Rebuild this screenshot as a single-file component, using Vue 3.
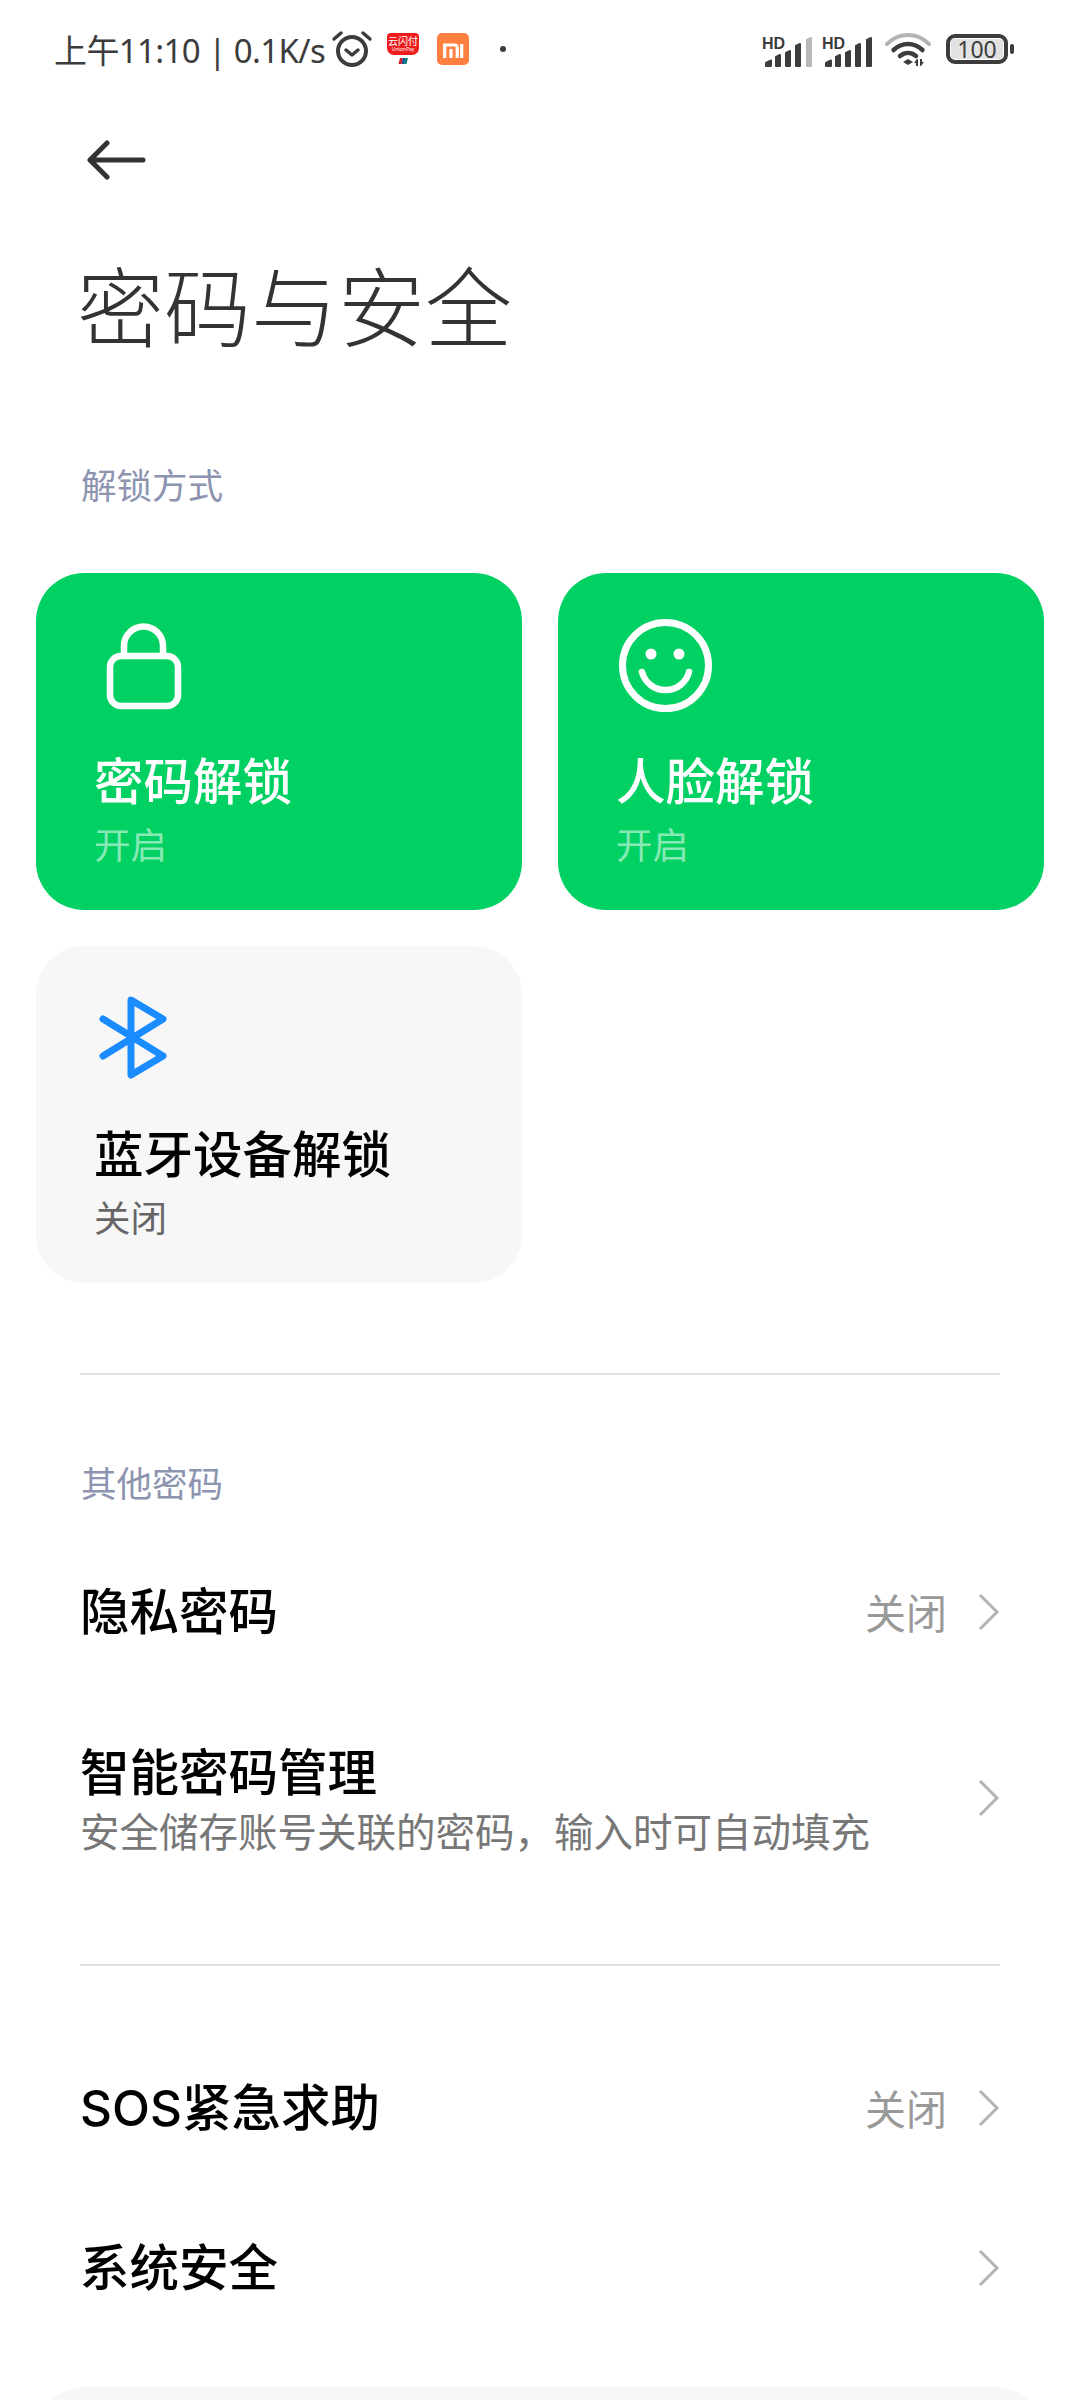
<template>
  <div class="page">
    <div class="status-bar">
      <div class="status-left">
        <span class="status-text">上午11:10 | 0.1K/s</span>
        <svg class="ic-alarm" width="42" height="38" viewBox="0 0 42 38">
          <circle cx="21" cy="21" r="14" fill="none" stroke="#3c3c3c" stroke-width="4" />
          <path d="M15 20l6 5 6-5" fill="none" stroke="#3c3c3c" stroke-width="3.5" stroke-linecap="round" stroke-linejoin="round" />
          <path d="M3 9l7-6M39 9l-7-6" fill="none" stroke="#3c3c3c" stroke-width="3.5" stroke-linecap="round" />
        </svg>
        <svg class="ic-union" width="32" height="32" viewBox="0 0 32 32">
          <path d="M4 0h24a4 4 0 0 1 4 4v11a7 7 0 0 1-7 7H7a7 7 0 0 1-7-7V4a4 4 0 0 1 4-4z" fill="#ee1c1c" />
          <text x="16" y="12" text-anchor="middle" class="union-cn">云闪付</text>
          <text x="16" y="18" text-anchor="middle" class="union-en">UnionPay</text>
          <path d="M13 25h3l-1.500 6h-3z" fill="#d81e2c" />
          <path d="M16 25h2.500l-1.500 6h-2.500z" fill="#0a4f8c" />
          <path d="M18.500 25h2.500l-1.500 6H17z" fill="#0a7a78" />
        </svg>
        <svg class="ic-mi" width="32" height="32" viewBox="0 0 32 32">
          <rect width="32" height="32" rx="5" fill="#ff7f41" />
          <path d="M7.700 25V12h10a2.500 2.500 0 0 1 2.500 2.500V25M14 16v9M24.700 11v14" fill="none" stroke="#fff" stroke-width="3.200" />
        </svg>
        <span class="status-dot"></span>
      </div>
      <div class="status-right">
        <svg class="ic-signal" width="50" height="36" viewBox="0 -3 50 36">
          <text x="0" y="12.500" class="hd">HD</text>
          <path d="M4 30V27L9 24.500V30ZM14 30V21L18 19V30ZM24 30V17L28 15V30ZM34 30V10L38 8V30Z" fill="#3c3c3c" stroke="#3c3c3c" stroke-width="2" stroke-linejoin="round" />
          <path d="M45 30V4L49 2V30Z" fill="#b8b8b8" stroke="#b8b8b8" stroke-width="2" stroke-linejoin="round" />
        </svg>
        <svg class="ic-signal" width="50" height="36" viewBox="0 -3 50 36">
          <text x="0" y="12.500" class="hd">HD</text>
          <path d="M4 30V27L9 24.500V30ZM14 30V21L18 19V30ZM24 30V17L28 15V30ZM34 30V10L38 8V30ZM45 30V4L49 2V30Z" fill="#3c3c3c" stroke="#3c3c3c" stroke-width="2" stroke-linejoin="round" />
        </svg>
        <svg class="ic-wifi" width="48" height="36" viewBox="0 0 48 36">
          <path d="M3 13C15 1 33 1 45 13" fill="none" stroke="#b4b4b4" stroke-width="4" stroke-linecap="round" />
          <path d="M9.500 19C18 11 30 11 38.500 19" fill="none" stroke="#3c3c3c" stroke-width="4.500" stroke-linecap="round" />
          <path d="M16 25c5-4 11-4 16 0" fill="none" stroke="#3c3c3c" stroke-width="4.500" stroke-linecap="round" />
          <path d="M19 31l5-3 5 3-5 3z" fill="#3c3c3c" />
          <path d="M33 28l-3 4h2v3h2v-7zM37 35l3-4h-2v-3h-2v7z" fill="#3c3c3c" />
        </svg>
        <div class="battery">
          <div class="battery-body"><span class="battery-fill">100</span></div>
          <span class="battery-nub"></span>
        </div>
      </div>
    </div>

    <div class="nav">
      <svg width="60" height="40" viewBox="0 0 60 40">
        <path d="M4 20h53M21 3L4 20l17 17" fill="none" stroke="#333" stroke-width="5" stroke-linecap="round" stroke-linejoin="round" />
      </svg>
    </div>

    <h1 class="title">密码与安全</h1>

    <div class="label first">解锁方式</div>

    <div class="cards">
      <div v-for="card in cards" :key="card.name" class="card" :class="{ on: card.on }">
        <svg class="card-icon" width="100" height="100" viewBox="0 0 100 100">
          <g v-if="card.icon === 'lock'" fill="none" stroke="#fff" stroke-width="6.500">
            <rect x="16" y="40" width="68" height="50" rx="11" />
            <path d="M30 40V30a19.500 19.500 0 0 1 39 0v10" />
          </g>
          <g v-else-if="card.icon === 'face'">
            <circle cx="49.500" cy="49.500" r="43" fill="none" stroke="#fff" stroke-width="7" />
            <circle cx="35" cy="38" r="5.500" fill="#fff" />
            <circle cx="63" cy="38" r="5.500" fill="#fff" />
            <path d="M26 56A24.300 24.300 0 0 0 73 56" fill="none" stroke="#fff" stroke-width="6.500" stroke-linecap="round" />
          </g>
          <path v-else d="M9 30L69 67L37 86V11L69 30L9 67" fill="none" stroke="#1a8cff" stroke-width="7" stroke-linecap="round" stroke-linejoin="round" />
        </svg>
        <div class="card-name">{{ card.name }}</div>
        <div class="card-state">{{ card.state }}</div>
      </div>
    </div>

    <div class="divider first-div"></div>

    <div class="label second">其他密码</div>

    <div class="row">
      <div class="row-name">隐私密码</div>
      <span class="row-value">关闭</span>
      <svg class="chev" width="22" height="38" viewBox="0 0 22 38"><path d="M2 2l17 17L2 36" fill="none" stroke="#b3b3b3" stroke-width="3" /></svg>
    </div>
    <div class="row tall">
      <div class="row-main">
        <div class="row-name">智能密码管理</div>
        <div class="row-sub">安全储存账号关联的密码，输入时可自动填充</div>
      </div>
      <svg class="chev" width="22" height="38" viewBox="0 0 22 38"><path d="M2 2l17 17L2 36" fill="none" stroke="#b3b3b3" stroke-width="3" /></svg>
    </div>

    <div class="divider second-div"></div>

    <div class="row">
      <div class="row-name">SOS紧急求助</div>
      <span class="row-value">关闭</span>
      <svg class="chev" width="22" height="38" viewBox="0 0 22 38"><path d="M2 2l17 17L2 36" fill="none" stroke="#b3b3b3" stroke-width="3" /></svg>
    </div>
    <div class="row">
      <div class="row-name">系统安全</div>
      <svg class="chev" width="22" height="38" viewBox="0 0 22 38"><path d="M2 2l17 17L2 36" fill="none" stroke="#b3b3b3" stroke-width="3" /></svg>
    </div>

    <div class="bottom-card"></div>
  </div>
</template>

<script setup>
const cards = [
  { name: "密码解锁", state: "开启", on: true, icon: "lock" },
  { name: "人脸解锁", state: "开启", on: true, icon: "face" },
  { name: "蓝牙设备解锁", state: "关闭", on: false, icon: "bluetooth" },
];
</script>

<style scoped>
.page {
  width: 1080px;
  height: 2400px;
  overflow: hidden;
  background: #fff;
  font-family: "Noto Sans", "Noto Sans CJK SC", sans-serif;
  color: #000;
}

.status-bar {
  height: 98px;
  display: flex;
  justify-content: space-between;
  align-items: center;
  padding: 0 66px 0 54px;
}

.status-left,
.status-right {
  display: flex;
  align-items: center;
}

.status-text {
  font-size: 33px;
  color: #3c3c3c;
  white-space: nowrap;
  letter-spacing: -0.6px;
}

.ic-alarm {
  margin-left: 6px;
}

.ic-union {
  margin-left: 14px;
}

.ic-mi {
  margin-left: 18px;
}

.status-dot {
  width: 6px;
  height: 6px;
  border-radius: 50%;
  background: #3c3c3c;
  margin-left: 31px;
}

.union-cn {
  font-size: 10px;
  fill: #fff;
}

.union-en {
  font-size: 5px;
  fill: #fff;
}

.hd {
  font-family: "Liberation Sans", sans-serif;
  font-size: 16px;
  font-weight: 700;
  fill: #3c3c3c;
}

.ic-signal {
  margin-top: 3px;
}

.ic-signal + .ic-signal {
  margin-left: 10px;
}

.ic-wifi {
  margin-left: 12px;
}

.battery {
  display: flex;
  align-items: center;
  margin-left: 14px;
}

.battery-body {
  width: 62px;
  height: 30px;
  box-sizing: border-box;
  border: 4px solid #3c3c3c;
  border-radius: 9px;
  padding: 1px;
  display: flex;
}

.battery-fill {
  flex: 1;
  background: #e2e2e2;
  border-radius: 3px;
  font-size: 23px;
  line-height: 20px;
  text-align: center;
  color: #3c3c3c;
}

.battery-nub {
  width: 4px;
  height: 10px;
  background: #3c3c3c;
  border-radius: 2px;
  margin-left: 2px;
}

.nav {
  height: 124px;
  display: flex;
  align-items: center;
  padding-left: 86px;
}

.title {
  margin: 25px 0 0;
  padding-left: 77px;
  font-size: 87px;
  line-height: 120px;
  font-weight: 300;
  color: #333;
}

.label {
  padding-left: 81px;
  font-size: 35.500px;
  line-height: 50px;
  color: #8c94b0;
}

.label.first {
  margin-top: 93px;
}

.label.second {
  margin-top: 83px;
  margin-bottom: 24px;
}

.cards {
  margin-top: 63px;
  padding: 0 36px;
  display: grid;
  grid-template-columns: 486px 486px;
  gap: 36px;
}

.card {
  height: 337px;
  box-sizing: border-box;
  padding: 43px 0 0 58px;
  border-radius: 48px;
  background: #f7f7f7;
}

.card.on {
  background: #00d162;
}

.card-icon {
  display: block;
}

.card-name {
  margin-top: 35px;
  font-size: 49.500px;
  line-height: 60px;
  font-weight: 500;
  color: #000;
}

.card-state {
  margin-top: 8px;
  font-size: 36.500px;
  line-height: 52px;
  color: #666;
}

.card.on .card-name {
  color: #fff;
}

.card.on .card-state {
  color: rgba(255, 255, 255, 0.55);
}

.divider {
  height: 2px;
  margin: 0 80px;
  background: #e0e0e0;
}

.first-div {
  margin-top: 90px;
}

.second-div {
  margin-top: 60px;
  margin-bottom: 62px;
}

.row {
  height: 160px;
  display: flex;
  align-items: center;
  padding: 0 80px 0 80px;
}

.row.tall {
  height: 212px;
}

.row-main {
  padding-top: 6px;
}

.row-name {
  font-family: Inter, "Noto Sans CJK SC", sans-serif;
  font-size: 49.500px;
  line-height: 60px;
  font-weight: 500;
}

.row-sub {
  margin-top: 1px;
  font-size: 39.500px;
  line-height: 56px;
  color: #777;
  white-space: nowrap;
}

.row-value {
  margin-left: auto;
  margin-bottom: 3px;
  font-size: 41px;
  color: #999;
}

.chev {
  margin-left: 31px;
}

.row.tall .chev,
.row:not(:has(.row-value)) .chev {
  margin-left: auto;
}

.bottom-card {
  margin: 39px 36px 0;
  height: 200px;
  border-radius: 48px;
  background: #f7f7f7;
}
</style>
